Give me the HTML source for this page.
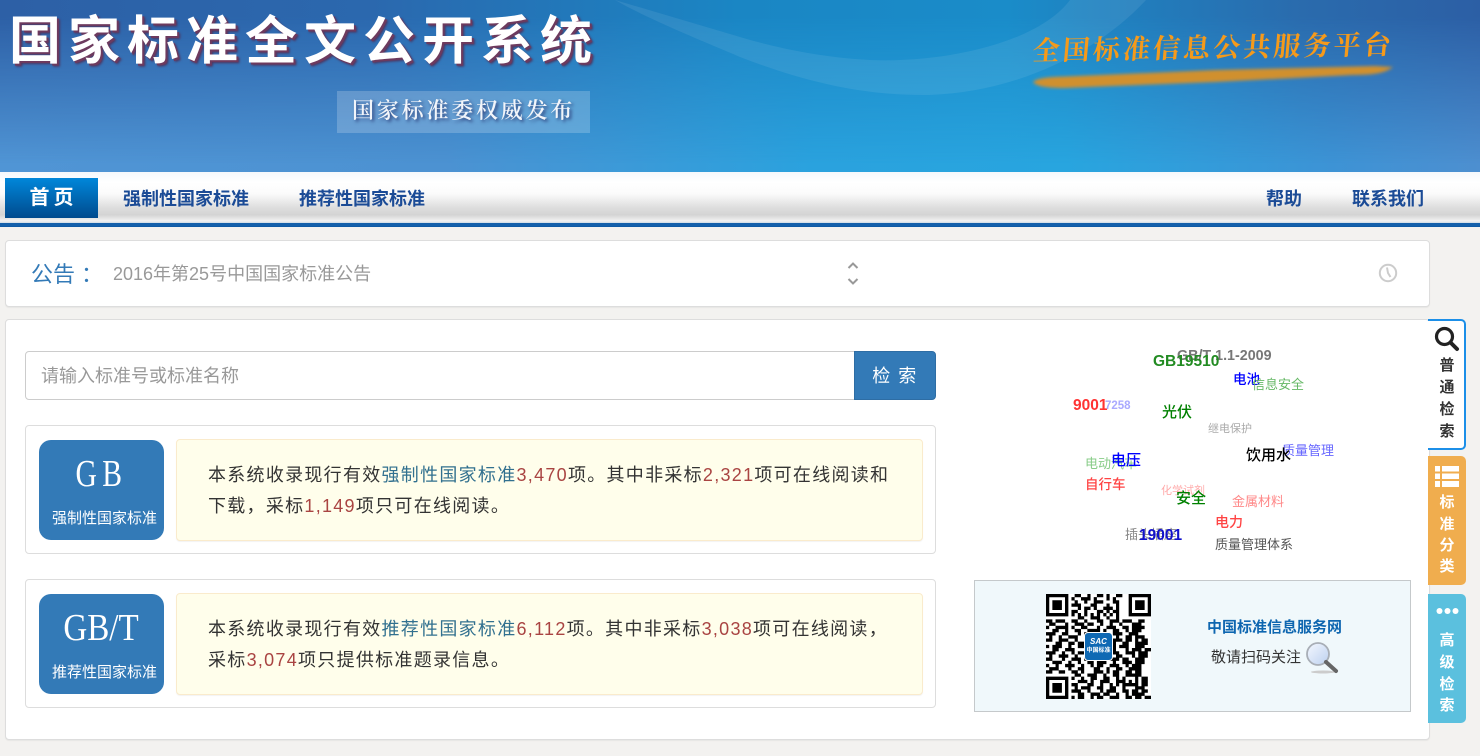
<!DOCTYPE html>
<html lang="zh-CN"><head><meta charset="utf-8"><title>国家标准全文公开系统</title>
<style>
*{box-sizing:border-box}
html,body{margin:0;padding:0;width:1480px;height:756px;overflow:hidden;background:#f3f2f0;font-family:"Liberation Sans","Noto Sans CJK SC",sans-serif;color:#333}
.a{position:absolute;white-space:nowrap}
#hd{position:absolute;left:0;top:0;width:1480px;height:172px;overflow:hidden;background:linear-gradient(90deg,#5095d5 0,#4c92d2 30%,#2aa2de 55%,#28a5df 72%,#3d93d5 90%,#4d8fd0 100%)}
#hd .t{position:absolute;inset:0;background:linear-gradient(90deg,#2d60a6 0,#2b68ae 25%,#1a86c4 50%,#1a8cc9 68%,#2a6bad 88%,#2c5fa5 100%);-webkit-mask-image:linear-gradient(180deg,#000 0,#000 10%,transparent 95%);mask-image:linear-gradient(180deg,#000 0,#000 10%,transparent 95%)}
.title{left:9px;top:7px;font-size:52px;line-height:70px;font-weight:700;color:#fff;letter-spacing:7px;text-shadow:2px 2px 0 #6d3a5e,3px 3px 2px #4d3560}
.subbox{left:337px;top:91px;width:253px;height:42px;background:rgba(255,255,255,.2)}
.sub{left:352px;top:91px;line-height:38px;font-family:"Liberation Serif","Noto Serif CJK SC",serif;font-size:22px;letter-spacing:2.8px;color:#f2f5fa;font-weight:600;text-shadow:2px 2px 3px #30457f}
.slog{left:1033px;top:28px;line-height:40px;font-family:"Liberation Serif","Noto Serif CJK SC",serif;font-weight:700;font-size:27px;letter-spacing:3.05px;color:#f59a1b;transform:skewX(-5deg) skewY(-1deg)}
#nav{position:absolute;left:0;top:172px;width:1480px;height:51px;background:linear-gradient(180deg,#f4f8fc 0,#fff 20%,#fbfbfb 42%,#dcdcdc 72%,#d4d4d4 84%,#f2f2f2 96%,#cfdbe6 100%)}
#line{position:absolute;left:0;top:223px;width:1480px;height:4px;background:#1460ab;border-bottom:1px solid #0e5aa6}
.home{left:5px;top:178px;width:93px;height:40px;padding-left:4px;background:linear-gradient(180deg,#0087da,#004a8d);color:#fff;font-size:20px;font-weight:700;line-height:41px;text-align:center;letter-spacing:4px}
.ni{top:185px;font-size:18px;line-height:28px;font-weight:700;color:#1b4b96}
.panel{position:absolute;left:5px;width:1425px;background:#fff;border:1px solid #ddd;border-radius:4px;box-shadow:0 1px 1px rgba(0,0,0,.05)}
.card{position:absolute;left:25px;width:911px;height:129px;background:#fff;border:1px solid #ddd;border-radius:4px}
.blue{position:absolute;left:39px;width:125px;height:100px;background:#337ab7;border-radius:12px;color:#fff}
.blue b{position:absolute;left:0;right:0;top:12px;text-align:center;font:400 38px/44px "Liberation Serif","Noto Serif CJK SC",serif}
.blue span{position:absolute;left:13px;top:68px;font-size:15px;line-height:22px;white-space:nowrap}
.cream{position:absolute;left:176px;width:747px;height:102px;background:#fffeeb;border:1px solid #faebcc;border-radius:4px;box-shadow:0 1px 1px rgba(0,0,0,.05)}
.tx{position:absolute;left:31px;top:20px;width:690px;font-size:18px;line-height:31px;letter-spacing:1.28px;color:#333}
.tx i{font-style:normal;color:#31708f}.tx u{text-decoration:none;color:#a94442}
.w{position:absolute;white-space:nowrap;line-height:20px;transform:translateY(-9px)}
.tab{position:absolute;left:1428px;width:38px;text-align:center;font-size:15px;font-weight:700;border-radius:0 5px 5px 0}
.tab span{position:absolute;left:0;width:38px;line-height:20px;margin-top:1px}
</style></head><body>
<div id="hd"><div class="t"></div>
<svg class="a" style="left:0;top:0" width="1480" height="172" fill="#fff">
<path d="M615 0L740 37C800 55 860 62 900 60C960 58 1040 40 1070 0H1146C1100 50 1020 92 929 95C860 96 800 80 740 57C700 40 650 20 615 0Z" opacity=".08"/>
</svg>
</div>
<div class="a title">国家标准全文公开系统</div>
<div class="a subbox"></div>
<div class="a sub" style="top:92px">国家标准委权威发布</div>
<svg class="a" style="left:1025px;top:60px" width="375" height="35"><defs><filter id="bl"><feGaussianBlur stdDeviation="1.5"/></filter></defs><path d="M8 22C14 17 28 17 40 16.500L190 10L350 6L368 7C360 13 350 15 328 15L190 22L40 28C24 28 12 27 8 22Z" fill="#d0902e" filter="url(#bl)"/></svg>
<div class="a slog">全国标准信息公共服务平台</div>

<div id="nav"></div><div id="line"></div>
<div class="a home">首页</div>
<div class="a ni" style="left:123px">强制性国家标准</div>
<div class="a ni" style="left:299px">推荐性国家标准</div>
<div class="a ni" style="left:1266px">帮助</div>
<div class="a ni" style="left:1352px">联系我们</div>

<div class="panel" style="top:240px;height:67px"></div>
<div class="a" style="left:31px;top:259px;font-size:22px;line-height:32px;color:#337ab7">公告<span style="margin-left:6px">：</span></div>
<div class="a" style="left:113px;top:261px;font-size:18px;line-height:26px;color:#999">2016年第25号中国国家标准公告</div>
<svg class="a" style="left:846px;top:260px" width="14" height="28" fill="none" stroke="#999" stroke-width="2"><path d="M2.500 8L7 3.500L11.500 8M2.500 19L7 23.500L11.500 19"/></svg>
<svg class="a" style="left:1378px;top:263px" width="20" height="20" fill="none" stroke="#ccc" stroke-width="2"><circle cx="10" cy="10" r="8.200"/><path d="M9 4.500L10 10L12.500 14"/></svg>

<div class="panel" style="top:319px;height:421px"></div>
<div class="a" style="left:25px;top:351px;width:830px;height:49px;background:#fff;border:1px solid #ccc;border-radius:4px 0 0 4px;font-size:18px;line-height:49px;padding-left:15px;color:#999">请输入标准号或标准名称</div>
<div class="a" style="left:854px;top:351px;width:82px;height:49px;background:#337ab7;border:1px solid #2e6da4;border-radius:0 4px 4px 0;color:#fff;font-size:18px;line-height:49px;text-align:center;letter-spacing:1.500px">检 索</div>

<div class="card" style="top:425px"></div>
<div class="blue" style="top:440px"><b style="letter-spacing:7px;transform:scaleX(.78);left:0">GB</b><span>强制性国家标准</span></div>
<div class="cream" style="top:439px"><div class="tx">本系统收录现行有效<i>强制性国家标准</i><u>3,470</u>项。其中非采标<u>2,321</u>项可在线阅读和下载，采标<u>1,149</u>项只可在线阅读。</div></div>

<div class="card" style="top:579px"></div>
<div class="blue" style="top:594px"><b style="transform:scaleX(.87);left:-1px">GB/T</b><span>推荐性国家标准</span></div>
<div class="cream" style="top:593px"><div class="tx">本系统收录现行有效<i>推荐性国家标准</i><u>6,112</u>项。其中非采标<u>3,038</u>项可在线阅读，采标<u>3,074</u>项只提供标准题录信息。</div></div>

<div class="w" style="left:1177px;top:355px;font:700 14.300px/20px 'Liberation Sans',sans-serif;color:#777">GB/T 1.1-2009</div>
<div class="w" style="left:1153px;top:361px;font-size:15.500px;font-weight:700;color:#228b22">GB19510</div>
<div class="w" style="left:1233px;top:379px;font-size:13.500px;color:#00f;font-weight:500">电池</div>
<div class="w" style="left:1252px;top:384px;font-size:13px;color:#66b866">信息安全</div>
<div class="w" style="left:1073px;top:405px;font-size:15.500px;font-weight:700;color:#ff3333">9001</div>
<div class="w" style="left:1105px;top:405px;font-size:11.500px;font-weight:700;color:#aaaaff">7258</div>
<div class="w" style="left:1162px;top:412px;font-size:15px;color:#008000;font-weight:500">光伏</div>
<div class="w" style="left:1208px;top:428px;font-size:11px;color:#aaa">继电保护</div>
<div class="w" style="left:1282px;top:450px;font-size:13px;color:#6666ff">质量管理</div>
<div class="w" style="left:1246px;top:455px;font-size:15px;color:#000;font-weight:500">饮用水</div>
<div class="w" style="left:1085px;top:463px;font-size:13px;color:#88cc88">电动汽车</div>
<div class="w" style="left:1111px;top:460px;font-size:15px;color:#00f;font-weight:500">电压</div>
<div class="w" style="left:1085px;top:484px;font-size:13.500px;color:#ff4444;font-weight:500">自行车</div>
<div class="w" style="left:1161px;top:490px;font-size:11px;color:#ffaaaa">化学试剂</div>
<div class="w" style="left:1176px;top:498px;font-size:15px;color:#008000;font-weight:500">安全</div>
<div class="w" style="left:1232px;top:501px;font-size:13px;color:#ff8888">金属材料</div>
<div class="w" style="left:1215px;top:521px;font-size:14px;color:#ff4444;font-weight:500">电力</div>
<div class="w" style="left:1125px;top:534px;font-size:13px;color:#888">插头插座</div>
<div class="w" style="left:1139px;top:535px;font-size:15.500px;font-weight:700;color:#1111cc">19001</div>
<div class="w" style="left:1215px;top:544px;font-size:13px;color:#555">质量管理体系</div>

<div class="a" style="left:974px;top:580px;width:437px;height:132px;background:#f0f8fb;border:1px solid #c5c9cb"></div>
<svg class="a" style="left:1046px;top:594px" width="105" height="105" viewBox="0 0 33 33">
<rect width="33" height="33" fill="#fff"/>
<g fill="none" stroke="#000" stroke-width="1.050">
<path d="M.5.5h6v6h-6zM26.500.5h6v6h-6zM.5 26.500h6v6h-6z"/>
<path d="M9 .5h2m2 0h1m2 0h2m1 0h1m2 0h2M8 1.500h1m2 0h3m1 0h1m3 0h1m1 0h1M9 2.500h1m2 0h1m2 0h3m3 0h2M8 3.500h3m3 0h2m3 0h1m2 0h1M10 4.500h1m1 0h2m1 0h1m2 0h3m1 0h1M8 5.500h2m2 0h1m3 0h2m1 0h1m1 0h2M8 6.500h1m1 0h1m1 0h1m1 0h1m1 0h1m1 0h1m1 0h1m1 0h1M10 7.500h2m2 0h3m2 0h1m2 0h1"/>
<path d="M0 8.500h2m1 0h3m2 0h2m2 0h1m3 0h2m2 0h3m1 0h3m2 0h2M1 9.500h2m3 0h1m2 0h3m1 0h2m2 0h1m2 0h1m2 0h1m3 0h3M0 10.500h1m2 0h4m1 0h1m2 0h2m3 0h1m2 0h3m2 0h2m1 0h4M2 11.500h2m2 0h1m2 0h2m2 0h4m1 0h1m2 0h2m2 0h1m1 0h3M0 12.500h3m2 0h2m3 0h1m1 0h1m3 0h1m2 0h1m1 0h3m2 0h3M1 13.500h1m2 0h1m2 0h3m2 0h2m4 0h2m2 0h1m2 0h2m1 0h3M0 14.500h2m2 0h3m2 0h1m2 0h1m8 0h3m1 0h2m1 0h1m1 0h2M3 15.500h2m2 0h2m1 0h3m8 0h1m2 0h2m2 0h4M0 16.500h1m1 0h3m2 0h1m2 0h2m8 0h2m1 0h3m2 0h3M2 17.500h2m2 0h3m3 0h1m8 0h1m3 0h1m1 0h3m1 0h2M0 18.500h3m2 0h1m2 0h1m1 0h2m8 0h3m2 0h3m1 0h3M1 19.500h1m2 0h3m2 0h1m2 0h1m1 0h1m4 0h2m1 0h2m3 0h1m1 0h3M0 20.500h2m3 0h1m2 0h3m1 0h3m2 0h1m2 0h3m1 0h2m2 0h3M2 21.500h3m2 0h1m2 0h1m2 0h2m1 0h3m2 0h1m2 0h3m1 0h3M0 22.500h1m2 0h1m2 0h3m2 0h1m2 0h1m1 0h2m2 0h3m2 0h1m1 0h3M1 23.500h3m3 0h1m2 0h2m3 0h2m2 0h1m2 0h2m2 0h4M0 24.500h2m2 0h2m2 0h2m1 0h1m3 0h3m1 0h1m1 0h2m2 0h2m1 0h2"/>
<path d="M9 25.500h2m2 0h3m2 0h1m2 0h2m2 0h5M8 26.500h1m2 0h1m2 0h2m2 0h2m2 0h1m1 0h1m3 0h1m1 0h2M10 27.500h3m1 0h1m2 0h3m2 0h3m1 0h1m1 0h1m1 0h2M8 28.500h2m3 0h2m2 0h1m2 0h1m1 0h1m1 0h5m1 0h2M9 29.500h1m1 0h3m2 0h2m2 0h2m2 0h1m3 0h3M8 30.500h3m2 0h1m3 0h1m1 0h3m2 0h2m1 0h2m1 0h2M10 31.500h2m2 0h3m1 0h2m2 0h1m2 0h1m1 0h4M8 32.500h1m1 0h2m2 0h1m1 0h2m2 0h3m2 0h2m1 0h2m1 0h2"/>
<path d="M2 2.500h3M2 3.500h3M2 4.500h3M28 2.500h3M28 3.500h3M28 4.500h3M2 28.500h3M2 29.500h3M2 30.500h3"/>
</g></svg>
<div class="a" style="left:1085px;top:633px;width:27px;height:27px;background:#0f69b4;border-radius:3px;outline:1px solid #fff;color:#fff;text-align:center;font-weight:700"><div style="font-size:8px;line-height:11px;font-style:italic;margin-top:3px">SAC</div><div style="font-size:6px;line-height:8px;white-space:nowrap">中国标准</div></div>
<div class="a" style="left:1207px;top:617px;font-size:15px;font-weight:700;line-height:22px;color:#0e66b0">中国标准信息服务网</div>
<div class="a" style="left:1211px;top:647px;font-size:15px;line-height:22px;color:#333">敬请扫码关注</div>
<svg class="a" style="left:1305px;top:641px" width="34" height="34"><defs><linearGradient id="gl" x1="0" y1="0" x2="1" y2="1"><stop offset="0" stop-color="#f4f8ff"/><stop offset="1" stop-color="#bcd0ef"/></linearGradient></defs><ellipse cx="18" cy="31" rx="12" ry="1.500" fill="#ccc"/><circle cx="13" cy="13" r="11" fill="url(#gl)" stroke="#a8aeb6" stroke-width="1.800"/><path d="M21 21L31 30" stroke="#666" stroke-width="4" stroke-linecap="round"/></svg>

<div class="tab" style="top:319px;height:131px;background:#fff;border:2px solid #1c8fe8;border-left:0;color:#333"></div>
<svg class="a" style="left:1434px;top:326px" width="26" height="26" fill="none" stroke="#222"><circle cx="10.500" cy="10.500" r="8" stroke-width="3.200"/><path d="M16.500 16.500L23 23" stroke-width="4" stroke-linecap="round"/></svg>
<div class="tab" style="top:319px;height:0;color:#333"><span style="top:36px">普</span><span style="top:58px">通</span><span style="top:80px">检</span><span style="top:102px">索</span></div>

<div class="tab" style="top:456px;height:129px;background:#f0ad4e;color:#fff"><span style="top:36px">标</span><span style="top:58px">准</span><span style="top:79px">分</span><span style="top:100px">类</span></div>
<svg class="a" style="left:1435px;top:466px" width="24" height="21" fill="#fff"><path d="M0 0h5v5.500H0zM7 0h17v5.500H7zM0 7.500h5V13H0zM7 7.500h17V13H7zM0 15h5v6H0zM7 15h17v6H7z"/></svg>

<div class="tab" style="top:594px;height:129px;background:#5bc0de;color:#fff"><span style="top:36px">高</span><span style="top:58px">级</span><span style="top:80px">检</span><span style="top:101px">索</span></div>
<svg class="a" style="left:1436px;top:607px" width="23" height="8" fill="#fff"><circle cx="3.500" cy="4" r="3"/><circle cx="11.500" cy="4" r="3"/><circle cx="19.500" cy="4" r="3"/></svg>
</body></html>
